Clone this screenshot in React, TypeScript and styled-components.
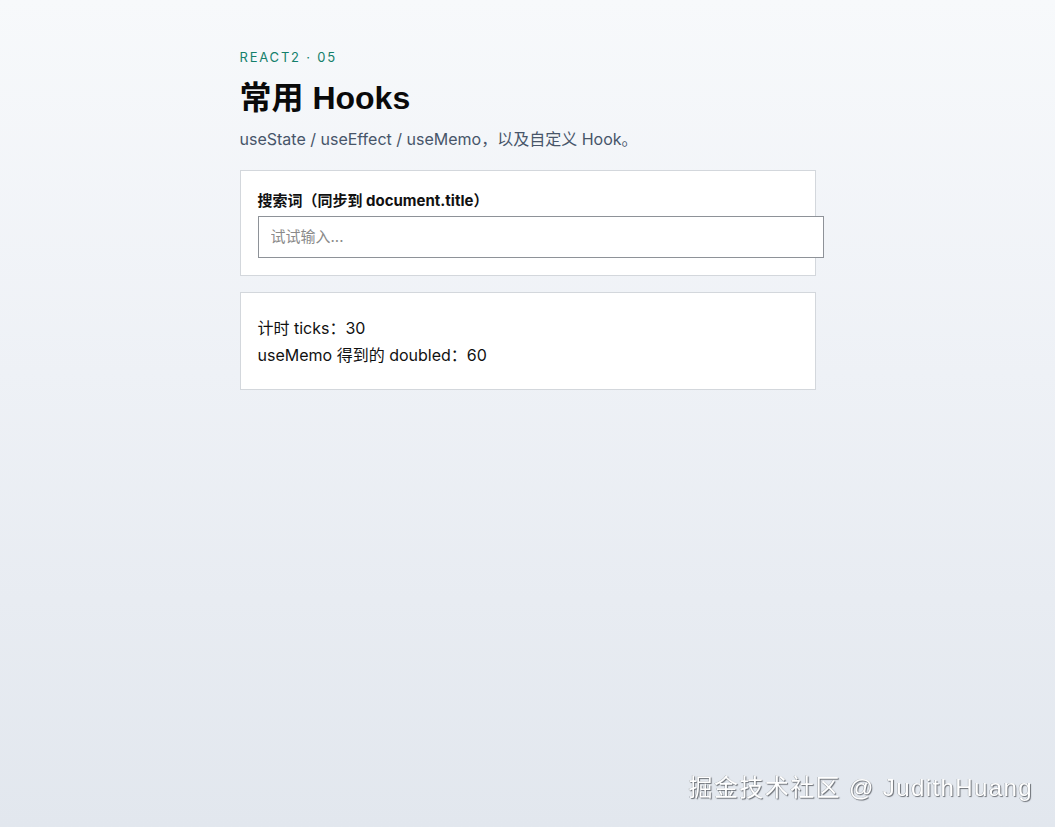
import React from "react";
import styled, { createGlobalStyle } from "styled-components";

const GlobalStyle = createGlobalStyle`
  html, body {
    margin: 0;
    padding: 0;
    min-height: 100%;
  }
  body {
    font-family: Inter, "Noto Sans CJK SC", sans-serif;
    color: #111;
    background: linear-gradient(180deg, #f7f9fb 0%, #eef1f6 45%, #e2e7ee 100%);
    min-height: 100vh;
  }
`;

const Page = styled.main`
  min-height: 100vh;
  box-sizing: border-box;
  padding-top: 48px;
`;

const Column = styled.div`
  max-width: 576px;
  margin: 0 auto;
  display: flex;
  flex-direction: column;
`;

const Eyebrow = styled.div`
  font-size: 13px;
  line-height: 18px;
  letter-spacing: 1.8px;
  color: #14806b;
`;

const Title = styled.h1`
  margin: 12px 0 0;
  font-family: "Liberation Sans", "Noto Sans CJK SC", sans-serif;
  font-size: 32px;
  line-height: 40px;
  font-weight: 700;
  color: #0a0a0a;
`;

const Lead = styled.p`
  margin: 9px 0 19px;
  font-size: 16px;
  line-height: 24px;
  color: #475569;
`;

const Card = styled.section<{ $pad: string }>`
  background: #fff;
  border: 1px solid #d3d7dc;
  padding: ${(p) => p.$pad};
  margin-bottom: 16px;
`;

const Label = styled.label`
  display: block;
  font-size: 15px;
  line-height: 24px;
  font-weight: 700;
  margin-bottom: 3px;
`;

const Input = styled.input`
  display: block;
  width: 100%;
  margin: 0;
  padding: 10px 12px;
  font-family: inherit;
  font-size: 15px;
  line-height: 20px;
  border: 1px solid #8e9298;
  border-radius: 0;
  background: #fff;
  outline: none;
  &::placeholder {
    color: #8a8a8a;
  }
`;

const Line = styled.div`
  font-size: 16px;
  line-height: 27px;
  color: #111;
`;

const Watermark = styled.div`
  position: fixed;
  right: 22px;
  bottom: 24px;
  font-size: 24px;
  letter-spacing: 1.4px;
  color: #fff;
  text-shadow: 1px 1px 1px #6b6f75, -0.5px -0.5px 0 #9aa0a6;
  font-family: "Liberation Sans", "Noto Sans CJK SC", sans-serif;
`;

export default function App() {
  return (
    <Page>
      <GlobalStyle />
      <Column>
        <Eyebrow>REACT2 · 05</Eyebrow>
        <Title>常用 Hooks</Title>
        <Lead>useState / useEffect / useMemo，以及自定义 Hook。</Lead>
        <Card $pad="18px 17px 17px">
          <Label htmlFor="q">搜索词（同步到 document.title）</Label>
          <Input id="q" placeholder="试试输入..." />
        </Card>
        <Card $pad="22px 17px 20px">
          <Line>计时 ticks：30</Line>
          <Line>useMemo 得到的 doubled：60</Line>
        </Card>
      </Column>
      <Watermark>掘金技术社区 @ JudithHuang</Watermark>
    </Page>
  );
}
